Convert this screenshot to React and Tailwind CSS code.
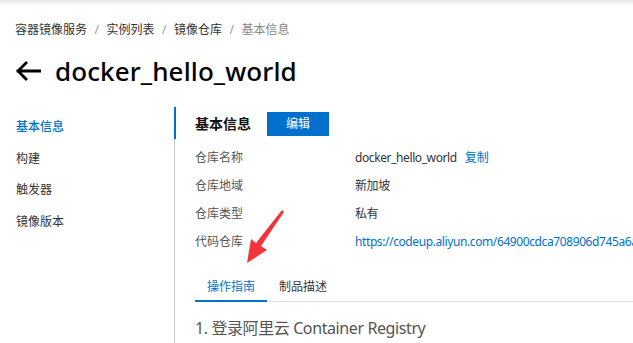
import React from 'react'

const font = { fontFamily: '"Noto Sans", "Noto Sans CJK SC", sans-serif' }

const navItems = ['基本信息', '构建', '触发器', '镜像版本']

const rows = [
  { label: '仓库名称', value: 'docker_hello_world', copy: true },
  { label: '仓库地域', value: '新加坡' },
  { label: '仓库类型', value: '私有' },
  { label: '代码仓库', value: 'https://codeup.aliyun.com/64900cdca708906d745a6a3f/docker_hello_world.git', link: true },
]

const App = () => {
  return (
    <div className="relative w-[633px] h-[343px] overflow-hidden bg-white text-[#333]" style={font}>
      <div className="h-[6px] bg-gradient-to-b from-[#e6e6e6] to-white" />

      <div className="flex items-center gap-[7.5px] pl-[15px] pt-[16px] text-[12px] leading-[16px] text-[#333]">
        <span>容器镜像服务</span>
        <span className="text-[#999]">/</span>
        <span>实例列表</span>
        <span className="text-[#999]">/</span>
        <span>镜像仓库</span>
        <span className="text-[#999]">/</span>
        <span className="text-[#888]">基本信息</span>
      </div>

      <div className="flex items-center pl-[15px] mt-[15px] h-[36px]">
        <svg width="26" height="20" viewBox="0 0 26 20" className="shrink-0">
          <path d="M25 10H3M11 2L3 10l8 8" fill="none" stroke="#000" strokeWidth="2.8" strokeLinecap="square" />
        </svg>
        <h1 className="ml-[14px] text-[26px] leading-[36px] font-medium text-black tracking-[0.1px]">docker_hello_world</h1>
      </div>

      <div className="flex mt-[18px]">
        <div className="w-[174px] shrink-0 pl-[16px] pt-[10px] text-[12px]">
          {navItems.map((item, i) => (
            <div key={item} className={`h-[31.7px] leading-[20px] ${i === 0 ? 'text-[#0070cc] font-medium' : 'text-[#333]'}`}>
              {item}
            </div>
          ))}
        </div>

        <div className="relative flex-1 min-w-0 border-l border-[#c8c8c8] pl-[20px] h-[240px]">
          <div className="absolute -left-[1px] top-0 w-[2px] h-[32px] bg-[#0070cc]" />
          <div className="flex items-center gap-[16px] pt-[5px]">
            <span className="text-[14px] font-bold text-[#111] leading-[20px]">基本信息</span>
            <button className="w-[62px] h-[24px] bg-[#0070cc] text-white text-[12px] leading-[24px]">编辑</button>
          </div>

          <div className="mt-[8px] text-[12px]">
            {rows.map(row => (
              <div key={row.label} className="flex items-center h-[28px] whitespace-nowrap">
                <span className="w-[160px] shrink-0 text-[#555]">{row.label}</span>
                <span className={`tracking-[-0.4px] ${row.link ? 'text-[#0070cc]' : 'text-[#333]'}`}>{row.value}</span>
                {row.copy && <span className="ml-[8px] text-[#0070cc]">复制</span>}
              </div>
            ))}
          </div>

          <div className="flex mt-[22px] border-b border-[#ddd] text-[12px]">
            <div className="w-[72px] text-center pb-[4px] text-[#0070cc] border-b-2 border-[#0070cc] -mb-[1px]">操作指南</div>
            <div className="ml-[12px] pb-[4px] text-[#333]">制品描述</div>
          </div>

          <div className="mt-[15px] text-[16px] leading-[22px] text-[#555] tracking-[-0.4px]">1. 登录阿里云 Container Registry</div>
        </div>
      </div>

      <svg className="absolute left-[244px] top-[208px]" width="44" height="58" viewBox="0 0 44 58">
        <path d="M38 2 L40 4 L17 38 L23 42 L3 55 L7 31 L12 35 Z" fill="#f5333a" />
      </svg>
    </div>
  )
}

export default App
